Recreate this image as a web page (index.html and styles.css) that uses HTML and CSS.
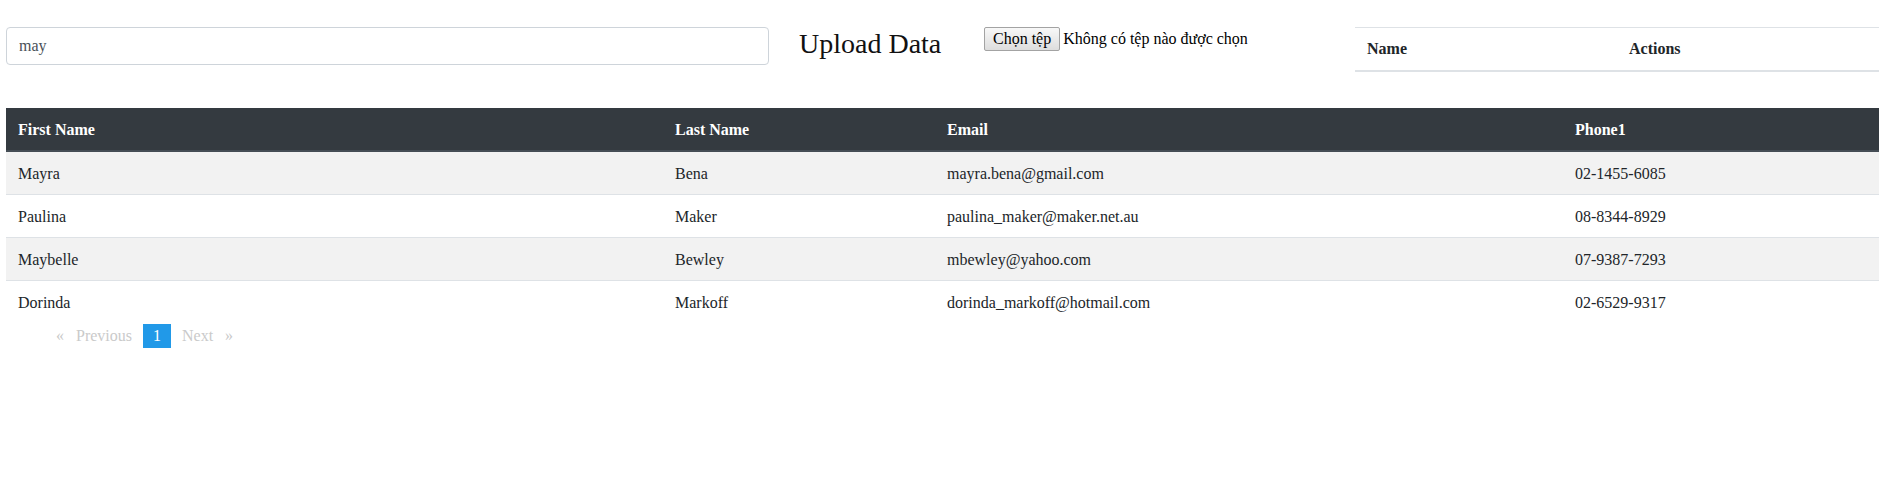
FILE: index.html
```html
<!DOCTYPE html>
<html lang="vi">
<head>
<meta charset="utf-8">
<title>Upload Data</title>
<link rel="stylesheet" href="styles.css">
</head>
<body>
<div class="page">
  <div class="top-row">
    <div class="search-col">
      <input class="search-input" type="text" value="may">
    </div>
    <div class="title-col">
      <h3 class="upload-title">Upload Data</h3>
    </div>
    <div class="file-col">
      <button class="file-btn" type="button">Chọn tệp</button><span class="file-status">Không có tệp nào được chọn</span>
    </div>
    <div class="names-col">
      <table class="names-table">
        <thead>
          <tr><th>Name</th><th>Actions</th></tr>
        </thead>
      </table>
    </div>
  </div>

  <table class="data-table">
    <colgroup>
      <col class="c-first"><col class="c-last"><col class="c-email"><col class="c-phone">
    </colgroup>
    <thead>
      <tr><th>First Name</th><th>Last Name</th><th>Email</th><th>Phone1</th></tr>
    </thead>
    <tbody>
      <tr><td>Mayra</td><td>Bena</td><td>mayra.bena@gmail.com</td><td>02-1455-6085</td></tr>
      <tr><td>Paulina</td><td>Maker</td><td>paulina_maker@maker.net.au</td><td>08-8344-8929</td></tr>
      <tr><td>Maybelle</td><td>Bewley</td><td>mbewley@yahoo.com</td><td>07-9387-7293</td></tr>
      <tr><td>Dorinda</td><td>Markoff</td><td>dorinda_markoff@hotmail.com</td><td>02-6529-9317</td></tr>
    </tbody>
  </table>

  <ul class="pagination">
    <li class="disabled prev"><span class="arrow-l">«</span>Previous</li>
    <li class="current">1</li>
    <li class="disabled next">Next<span class="arrow-r">»</span></li>
  </ul>
</div>
</body>
</html>
```

FILE: styles.css
```css
html, body {
  margin: 0;
  padding: 0;
  background: #fff;
}
body {
  font-family: "Liberation Serif", "Times New Roman", serif;
  font-size: 16px;
  line-height: 1.5;
  color: #212529;
}
.page {
  padding: 27px 10px 0 6px;
}
.top-row {
  display: flex;
  align-items: flex-start;
  margin-bottom: 36px;
}
.search-col {
  width: 793px;
  flex: none;
}
.search-input {
  display: block;
  box-sizing: border-box;
  width: 763px;
  height: 38px;
  margin: 0;
  padding: 6px 12px;
  border: 1px solid #ced4da;
  border-radius: 4px;
  font-family: "Liberation Serif", "Times New Roman", serif;
  font-size: 16px;
  line-height: 24px;
  color: #495057;
  background: #fff;
  outline: none;
}
.title-col {
  width: 185px;
  flex: none;
}
.upload-title {
  margin: 0 0 8px 0;
  font-size: 28px;
  font-weight: 500;
  line-height: 1.2;
  color: #111;
}
.file-col {
  width: 371px;
  flex: none;
  display: flex;
  align-items: center;
  height: 24px;
}
.file-btn {
  box-sizing: border-box;
  height: 24px;
  margin: 0 3px 0 0;
  padding: 1px 8px;
  border: 1px solid #a3a3a3;
  border-radius: 2px;
  background: linear-gradient(#f8f8f8, #dddddd);
  font-family: "Liberation Serif", "Times New Roman", serif;
  font-size: 16px;
  line-height: 20px;
  color: #000;
}
.file-status {
  font-size: 16px;
  line-height: 20px;
  color: #000;
}
.names-col {
  width: 524px;
  flex: none;
}
.names-table {
  width: 100%;
  border-collapse: collapse;
  table-layout: fixed;
}
.names-table th {
  text-align: left;
  font-weight: 700;
  padding: 9px 12px;
  line-height: 24px;
  border-top: 1px solid #dee2e6;
  border-bottom: 2px solid #dee2e6;
}
.data-table {
  width: 1873px;
  border-collapse: collapse;
  table-layout: fixed;
}
.c-first { width: 657px; }
.c-last { width: 272px; }
.c-email { width: 628px; }
.c-phone { width: 316px; }
.data-table th {
  background: #343a40;
  color: #fff;
  text-align: left;
  font-weight: 700;
  padding: 10px 12px 8px 12px;
  line-height: 24px;
  border-bottom: 2px solid #454d55;
}
.data-table td {
  padding: 10px 12px 8px 12px;
  line-height: 24px;
  border-bottom: 1px solid #dee2e6;
}
.data-table tbody tr:nth-child(odd) td {
  background: #f2f2f2;
}
.data-table tbody tr:last-child td {
  border-bottom: none;
  padding-bottom: 9px;
}
.pagination {
  display: flex;
  margin: 0;
  padding: 0 0 0 40px;
  list-style: none;
}
.pagination li {
  padding: 3px 10px;
  margin-right: 1px;
  font-size: 16px;
  line-height: 18px;
}
.pagination .disabled {
  color: #cacaca;
}
.pagination .current {
  background: #2199e8;
  color: #fff;
}
.arrow-l {
  margin-right: 12px;
}
.arrow-r {
  margin-left: 12px;
}
```
